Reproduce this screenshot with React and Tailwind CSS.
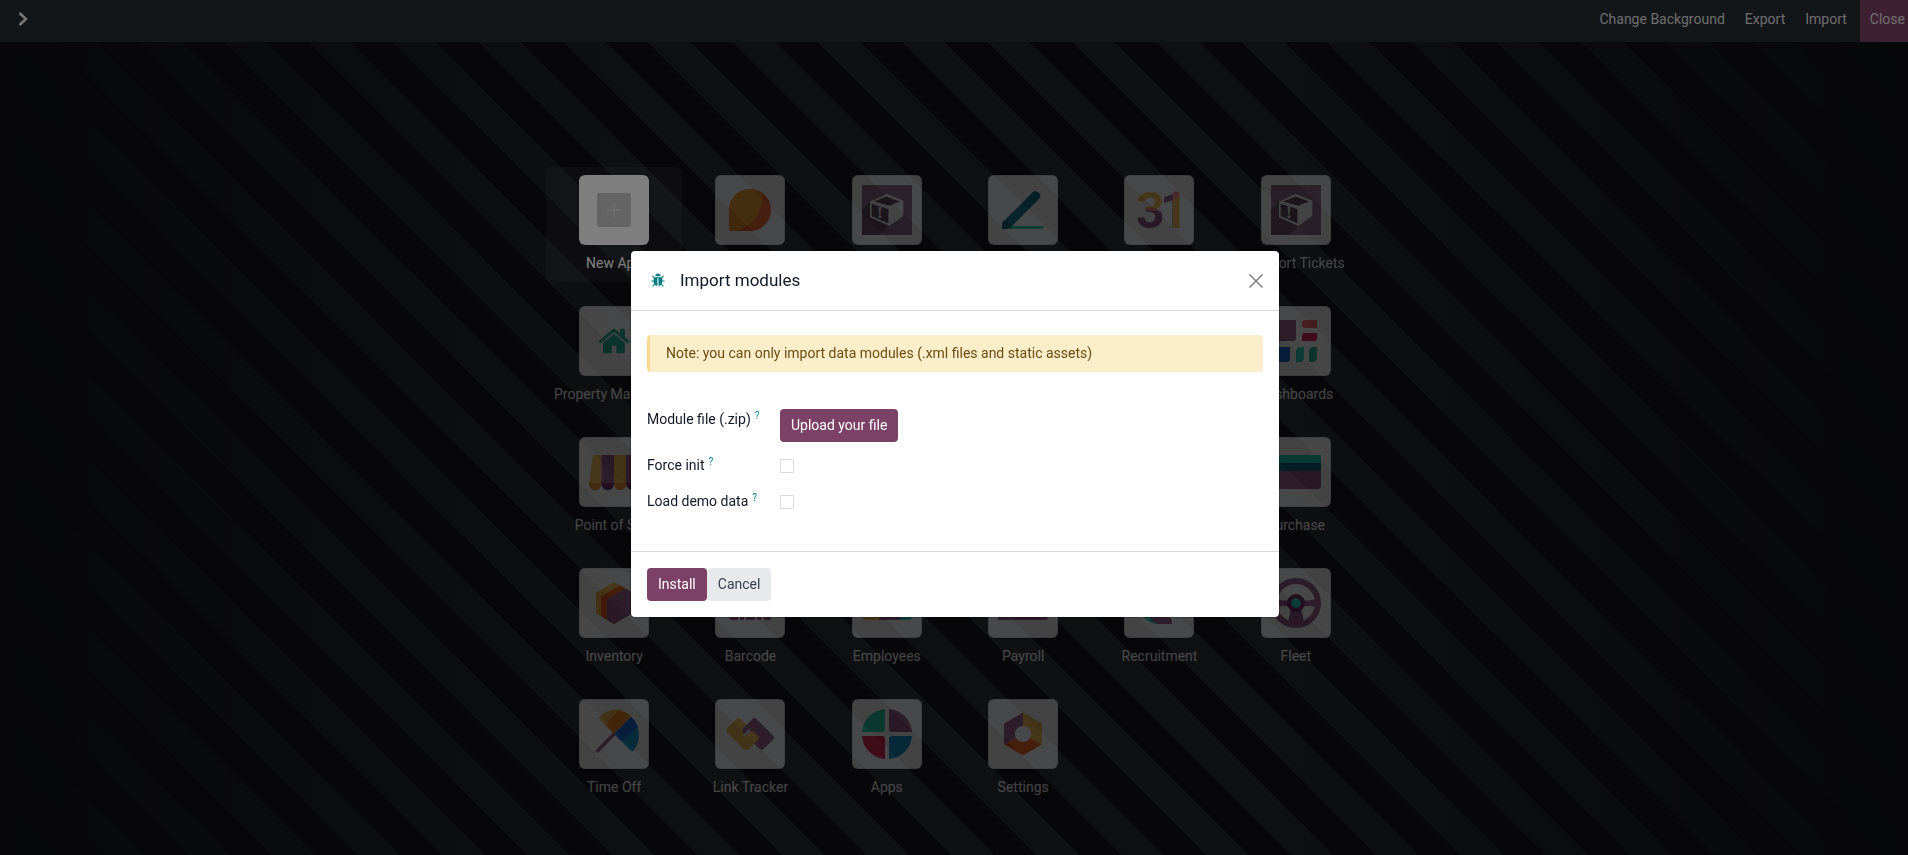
import { useState } from 'react';

const navLinks = ['Change Background', 'Export', 'Import'];

const TicketIcon = () => (
  <>
    <rect width="50" height="50" fill="#946a8a" />
    <path d="M8 16.7 0 25v25h18l9.300-9z" fill="#5f4559" />
    <path d="M24.700 9 41.300 15.700V31L27.300 41 8 32.300V16.700z" fill="#fff" />
    <path d="m12 16.600 12.700-5.100L38 16.400l-10.700 4.300zM9.600 18.800 26.400 24v14.600L9.600 31.200z" fill="#5f4559" />
    <text x="15" y="33" fontSize="17" fontWeight="700" fontFamily="Liberation Serif, serif" fill="#fff">!</text>
  </>
);

const icons = {
  chat: (
    <>
      <path d="M25 4a21 21 0 0 1 0 42H6a2 2 0 0 1-2-2V25A21 21 0 0 1 25 4z" fill="#fc5c1d" />
      <path d="M25 4c5 0 9.600 1.800 13.300 4.700C38 27 28 41 11 46H6a2 2 0 0 1-2-2V25A21 21 0 0 1 25 4z" fill="#f7931e" />
    </>
  ),
  ticket: <TicketIcon />,
  sign: (
    <>
      <path d="M9 41h37l-1 2q-.5 1-2 1H9z" fill="#1ad3a0" />
      <path d="M34.500 7.500a4.600 4.600 0 0 1 6.500 6.500L13.500 41.500q-2.500 2.500-6 2.500H4v-6z" fill="#02728f" />
      <path d="m4 38 3.500-3.500 6.500 6.500-.5.5Q11 44 7.500 44H4z" fill="#045a78" />
    </>
  ),
  calendar: (
    <>
      <defs>
        <linearGradient id="three" x1="0" y1="6" x2="0" y2="44" gradientUnits="userSpaceOnUse">
          <stop offset=".44" stopColor="#fbb945" />
          <stop offset=".44" stopColor="#fc868b" />
          <stop offset=".52" stopColor="#fc868b" />
          <stop offset=".52" stopColor="#985184" />
        </linearGradient>
        <linearGradient id="one" x1="31" y1="0" x2="46" y2="0" gradientUnits="userSpaceOnUse">
          <stop offset=".5" stopColor="#985184" />
          <stop offset=".5" stopColor="#fbb945" />
        </linearGradient>
      </defs>
      <text y="43" fontSize="50" fontWeight="700" fontFamily="Roboto, sans-serif">
        <tspan x="2" fill="url(#three)">3</tspan>
        <tspan x="26" fill="url(#one)">1</tspan>
      </text>
      <circle cx="42" cy="10" r="3.500" fill="#fc868b" />
    </>
  ),
  house: (
    <svg x="8" y="8" width="34" height="34" viewBox="0 0 1792 1792" fill="#12b08f">
      <path d="M1472 992v480q0 26-19 45t-45 19h-384v-384h-256v384h-384q-26 0-45-19t-19-45v-480q0-1 .5-3t.5-3l575-474 575 474q1 2 1 6zm223-69l-62 74q-8 9-21 11h-3q-13 0-21-7l-692-577-692 577q-12 8-24 7-13-2-21-11l-62-74q-8-10-7-23.500t11-21.500l719-599q32-26 76-26t76 26l244 204v-195q0-14 9-23t23-9h192q14 0 23 9t9 23v408l219 182q10 8 11 21.500t-7 23.500z" />
    </svg>
  ),
  dashboards: (
    <>
      <path d="M4 4h21v18a3 3 0 0 1-3 3H4z" fill="#985184" />
      <path d="M31 7a3 3 0 0 1 3-3h12v8H34a3 3 0 0 1-3-3z" fill="#fc6068" />
      <path d="M31 20a3 3 0 0 1 3-3h12v5a3 3 0 0 1-3 3H31z" fill="#e00b45" />
      <path d="M4 31h15v12a3 3 0 0 1-3 3H4z" fill="#0865d8" />
      <path d="M25 36q0-5 5-5h3v10q0 5-5 5h-3z" fill="#1ad3bb" />
      <path d="M38 36q0-5 5-5h3v10q0 5-5 5h-3z" fill="#14b489" />
    </>
  ),
  shop: (
    <>
      <path d="M0 36h12.500v1a6 6 0 0 1-12.500 0zM25 36h12.500v1a6 6 0 0 1-12.500 0z" fill="#f7811e" />
      <path d="M12.500 36H25v1a6 6 0 0 1-12.500 0zM37.500 36H50v1a6 6 0 0 1-12.500 0z" fill="#6e1c5a" />
      <path d="M7 8h5.500v28H0L3.500 11Q4 8 7 8zM25 8h12v28H25z" fill="#fbb945" />
      <path d="M12.500 8H25v28H12.500zM37 8h6q3 0 3.500 3L50 36H37z" fill="#985184" />
    </>
  ),
  card: (
    <>
      <path d="M0 24h50v15a3 3 0 0 1-3 3H0z" fill="#985184" />
      <path d="M0 16h50v8H0z" fill="#005e7a" />
      <path d="M0 8h50v8H0z" fill="#1ad3bb" />
    </>
  ),
  boxes: (
    <>
      <path d="M25 4 43 14.500v21L25 46 7 35.500v-21z" fill="#fbb945" />
      <path d="m31 7.500 12 7v21L25 46l-13-7.700v-20z" fill="#f8570c" />
      <path d="m36.500 10.700 6.500 3.800v21L25 46l-7-4V21.300z" fill="#985184" />
    </>
  ),
  barcode: (
    <path d="M4 8h9v34H7a3 3 0 0 1-3-3zM15 8h4v34h-4zM21 8h9v34h-9zM32 8h4v34h-4zM39 8h7v34h-7z" fill="#985184" />
  ),
  people: (
    <>
      <path d="M0 32h18v10H3a3 3 0 0 1-3-3z" fill="#fbb945" />
      <path d="M17 30h21v12H17z" fill="#985184" />
      <path d="M38 32h12v7a3 3 0 0 1-3 3h-9z" fill="#1ad3bb" />
    </>
  ),
  payslip: <path d="M0 12h50v27a3 3 0 0 1-3 3H0z" fill="#985184" />,
  recruit: (
    <>
      <path d="M4 25h21v21A21 21 0 0 1 4 25z" fill="#1ad3bb" />
      <path d="M14 34h14q10 2 10 12H24q-8-3-10-12z" fill="#985184" />
    </>
  ),
  wheel: (
    <>
      <circle cx="25" cy="25" r="22" fill="none" stroke="#985184" strokeWidth="6" />
      <path d="M5 21q10 3 20 0 10 3 20 0v8q-8-2-15 0l3 16H17l3-16q-7-2-15 0z" fill="#985184" />
      <circle cx="25" cy="25" r="9" fill="#6b1a55" />
      <circle cx="25" cy="25" r="5" fill="#1ad3bb" />
    </>
  ),
  umbrella: (
    <>
      <path d="M25 25 8.500 42" stroke="#985184" strokeWidth="3.500" strokeLinecap="round" />
      <path d="M9 9a25 25 0 0 1 22-8.300L16 16z" fill="#fbb945" />
      <path d="m16 16 14-15a25 25 0 0 1 12.300 6.700L25 25z" fill="#f78613" />
      <path d="M25 25 42.300 7.700A25 25 0 0 1 49 18L33 33z" fill="#0b65e0" />
      <path d="m33 33 15.500-15a25 25 0 0 1-4 23.500q-1.500 1.500-3 0z" fill="#0d9dd0" />
    </>
  ),
  link: (
    <>
      <rect x="2.500" y="15.500" width="29" height="19" rx="3" transform="rotate(45 17 25)" fill="#fbb945" />
      <rect x="18.500" y="15.500" width="29" height="19" rx="3" transform="rotate(45 33 25)" fill="#985184" />
      <path d="m20 28 5.500-5.500q1.500-1 3 0l4.500 4.500q1.500 2 0 4L22 41.500z" fill="#fbb945" />
      <path d="m20 28 6-6-2-2-6 6z" fill="#fff" opacity=".7" />
    </>
  ),
  apps: (
    <>
      <path d="M23 0v20a3 3 0 0 1-3 3H0A25 25 0 0 1 23 0z" fill="#1ad3a6" />
      <path d="M27 0a25 25 0 0 1 23 23H30a3 3 0 0 1-3-3z" fill="#985184" />
      <path d="M0 27h20a3 3 0 0 1 3 3v20A25 25 0 0 1 0 27z" fill="#e0103f" />
      <path d="M30 27h20a25 25 0 0 1-23 23V30a3 3 0 0 1 3-3z" fill="#0d92cc" />
    </>
  ),
  settings: (
    <>
      <path d="M25 4v13a8 8 0 0 0-7 12L6.500 35.500Q6 35 6 34V16q0-1.500 1-2L23.500 4.500Q24 4 25 4z" fill="#985184" />
      <path d="M25 4v13a8 8 0 0 1 7 12l11.500 6.500q.5-.5.5-1.500V16q0-1.500-1-2L26.500 4.500Q26 4 25 4z" fill="#fbb945" />
      <path d="M18 29 6.500 35.500l17 10q1.500.8 3 0l17-10L32 29a8 8 0 0 1-14 0z" fill="#f8570c" />
    </>
  ),
};

// slots without a name keep their place in the grid
const apps = [
  { icon: 'chat' },
  { icon: 'ticket' },
  { icon: 'sign' },
  { icon: 'calendar' },
  { name: 'Support Tickets', icon: 'ticket' },
  { name: 'Property Management', icon: 'house' },
  {},
  {},
  {},
  {},
  { name: 'Dashboards', icon: 'dashboards' },
  { name: 'Point of Sale', icon: 'shop' },
  {},
  {},
  {},
  {},
  { name: 'Purchase', icon: 'card' },
  { name: 'Inventory', icon: 'boxes' },
  { name: 'Barcode', icon: 'barcode' },
  { name: 'Employees', icon: 'people' },
  { name: 'Payroll', icon: 'payslip' },
  { name: 'Recruitment', icon: 'recruit' },
  { name: 'Fleet', icon: 'wheel' },
  { name: 'Time Off', icon: 'umbrella' },
  { name: 'Link Tracker', icon: 'link' },
  { name: 'Apps', icon: 'apps' },
  { name: 'Settings', icon: 'settings' },
];

const AppTile = ({ name, icon }) => (
  <a href="#" className="flex h-[115px] min-w-0 flex-col items-center gap-2 p-2 opacity-50">
    <span className="flex size-[70px] shrink-0 items-center justify-center rounded-md bg-white shadow-[inset_0_0_0_1px_rgba(0,0,0,0.12)]">
      <svg width="50" height="50" viewBox="0 0 50 50" fill="none" className="overflow-visible" aria-hidden="true">
        {icons[icon]}
      </svg>
    </span>
    <span className="max-w-full truncate text-white">{name}</span>
  </a>
);

const NewAppTile = () => (
  <a href="#" className="flex h-[115px] flex-col items-center gap-2 rounded-md bg-white/5 p-2">
    <span className="flex size-[70px] items-center justify-center rounded-md bg-white">
      <span className="flex size-[34px] items-center justify-center rounded-[2px] bg-[#c8c8c8]">
        <svg width="14" height="14" viewBox="0 0 14 14" stroke="#e4e4e4" strokeWidth="1.5" aria-hidden="true">
          <path d="M7 0v14M0 7h14" />
        </svg>
      </span>
    </span>
    <span className="text-white">New App</span>
  </a>
);

const Navbar = () => (
  <header className="flex h-[42px] items-stretch justify-between bg-[#262c33] text-[#dcdcdc]">
    <button type="button" aria-label="Next" className="px-[18px]">
      <svg width="10" height="14" viewBox="0 0 10 14" fill="none" stroke="#eee" strokeWidth="2.5" className="mb-1" aria-hidden="true">
        <path d="m1.500 1 6.500 6-6.500 6" />
      </svg>
    </button>
    <nav className="flex">
      {navLinks.map(link => (
        <a key={link} href="#" className="px-2.5 pt-[9px]">{link}</a>
      ))}
      <button type="button" className="ml-[3px] flex bg-[#7c4166] pt-[9px] pr-[3px] pl-2.5">Close</button>
    </nav>
  </header>
);

const Hint = () => <sup className="top-[-5px] ml-1 text-[10px] text-[#0180a5]">?</sup>;

const CheckRow = ({ id, label, checked, onChange }) => (
  <>
    <label htmlFor={id} className="h-[23px]">{label}<Hint /></label>
    <input
      id={id}
      type="checkbox"
      checked={checked}
      onChange={(e) => onChange(e.target.checked)}
      className="mt-1 size-3.5 appearance-none border border-[#d8dadd] bg-white checked:bg-[#7c4166]"
    />
  </>
);

const ImportModal = () => {
  const [forceInit, setForceInit] = useState(false);
  const [demoData, setDemoData] = useState(false);

  return (
    <div
      role="dialog"
      aria-labelledby="import-title"
      className="w-full max-w-[650px] rounded-[5px] border border-black/20 bg-white bg-clip-padding text-[#111827]"
    >
      {/* Header */}
      <div className="flex h-[60px] items-center border-b border-[#d8dadd] px-4">
        <svg width="15" height="15" viewBox="0 0 1792 1792" fill="#017e84" className="ml-1" aria-hidden="true">
          <path d="M1632 960q0 26-19 45t-45 19h-224q0 171-67 290l208 209q19 19 19 45t-19 45q-18 19-45 19t-45-19l-198-197q-5 5-15 13t-42 28.500-65 36.500-82 29-97 13v-896h-128v896q-51 0-101.500-13.500t-87-33-66-39-43.500-32.500l-15-14-183 207q-20 21-48 21-24 0-43-16-19-18-20.500-44.500t15.500-46.500l202-227q-58-114-58-274h-224q-26 0-45-19t-19-45 19-45 45-19h224v-294l-173-173q-19-19-19-45t19-45 45-19 45 19l173 173h844l173-173q19-19 45-19t45 19 19 45-19 45l-173 173v294h224q26 0 45 19t19 45zm-480-576h-640q0-133 93.500-226.500t226.500-93.500 226.500 93.500 93.500 226.500z" />
        </svg>
        <h4 id="import-title" className="ml-3.5 flex-1 text-[17px]">Import modules</h4>
        <button type="button" aria-label="Close">
          <svg width="14" height="14" viewBox="0 0 14 14" stroke="#808080" strokeWidth="1.5" aria-hidden="true">
            <path d="m.5.5 13 13M13.500.5l-13 13" />
          </svg>
        </button>
      </div>

      {/* Body */}
      <div className="px-4 pt-6 pb-[37px]">
        <div role="alert" className="rounded-[4px] border-l-3 border-[#f9d98f] bg-[#fcedcb] px-4 py-2 text-[#6a4d10]">
          Note: you can only import data modules (.xml files and static assets)
        </div>
        <div className="mt-[37px] grid grid-cols-[133px_1fr] items-start gap-y-[13px]">
          <label htmlFor="module-file">Module file (.zip)<Hint /></label>
          <button id="module-file" type="button" className="h-[33px] justify-self-start rounded-[4px] bg-[#7c4166] px-[11px] text-white">
            Upload your file
          </button>
          <CheckRow id="force-init" label="Force init" checked={forceInit} onChange={setForceInit} />
          <CheckRow id="demo-data" label="Load demo data" checked={demoData} onChange={setDemoData} />
        </div>
      </div>

      {/* Footer */}
      <div className="flex border-t border-[#d8dadd] p-4">
        <button type="button" className="h-[33px] rounded-[4px] bg-[#7c4166] px-[11px] text-white">Install</button>
        <button type="button" className="h-[33px] rounded-[4px] bg-[#e7e9ed] px-[11px] text-[#374151]">Cancel</button>
      </div>
    </div>
  );
};

export default function App() {
  return (
    <div className="min-h-screen bg-[#0e0f13] bg-[linear-gradient(90deg,#0e0f13_0%,transparent_35%,transparent_65%,#0e0f13_100%),repeating-linear-gradient(45deg,transparent_0_13px,#1f2125_13px_43px,transparent_43px_60px)] font-[Roboto,sans-serif] text-sm leading-[21px]">
      <Navbar />
      <main className="mx-auto grid max-w-[820px] grid-cols-6 gap-y-4 pt-[125px] pl-0.5">
        <NewAppTile />
        {apps.map((app, index) => (
          <AppTile key={index} {...app} />
        ))}
      </main>

      <div className="fixed inset-0 flex items-start justify-center bg-black/50 pt-[250px] pl-0.5">
        <ImportModal />
      </div>
    </div>
  );
}
